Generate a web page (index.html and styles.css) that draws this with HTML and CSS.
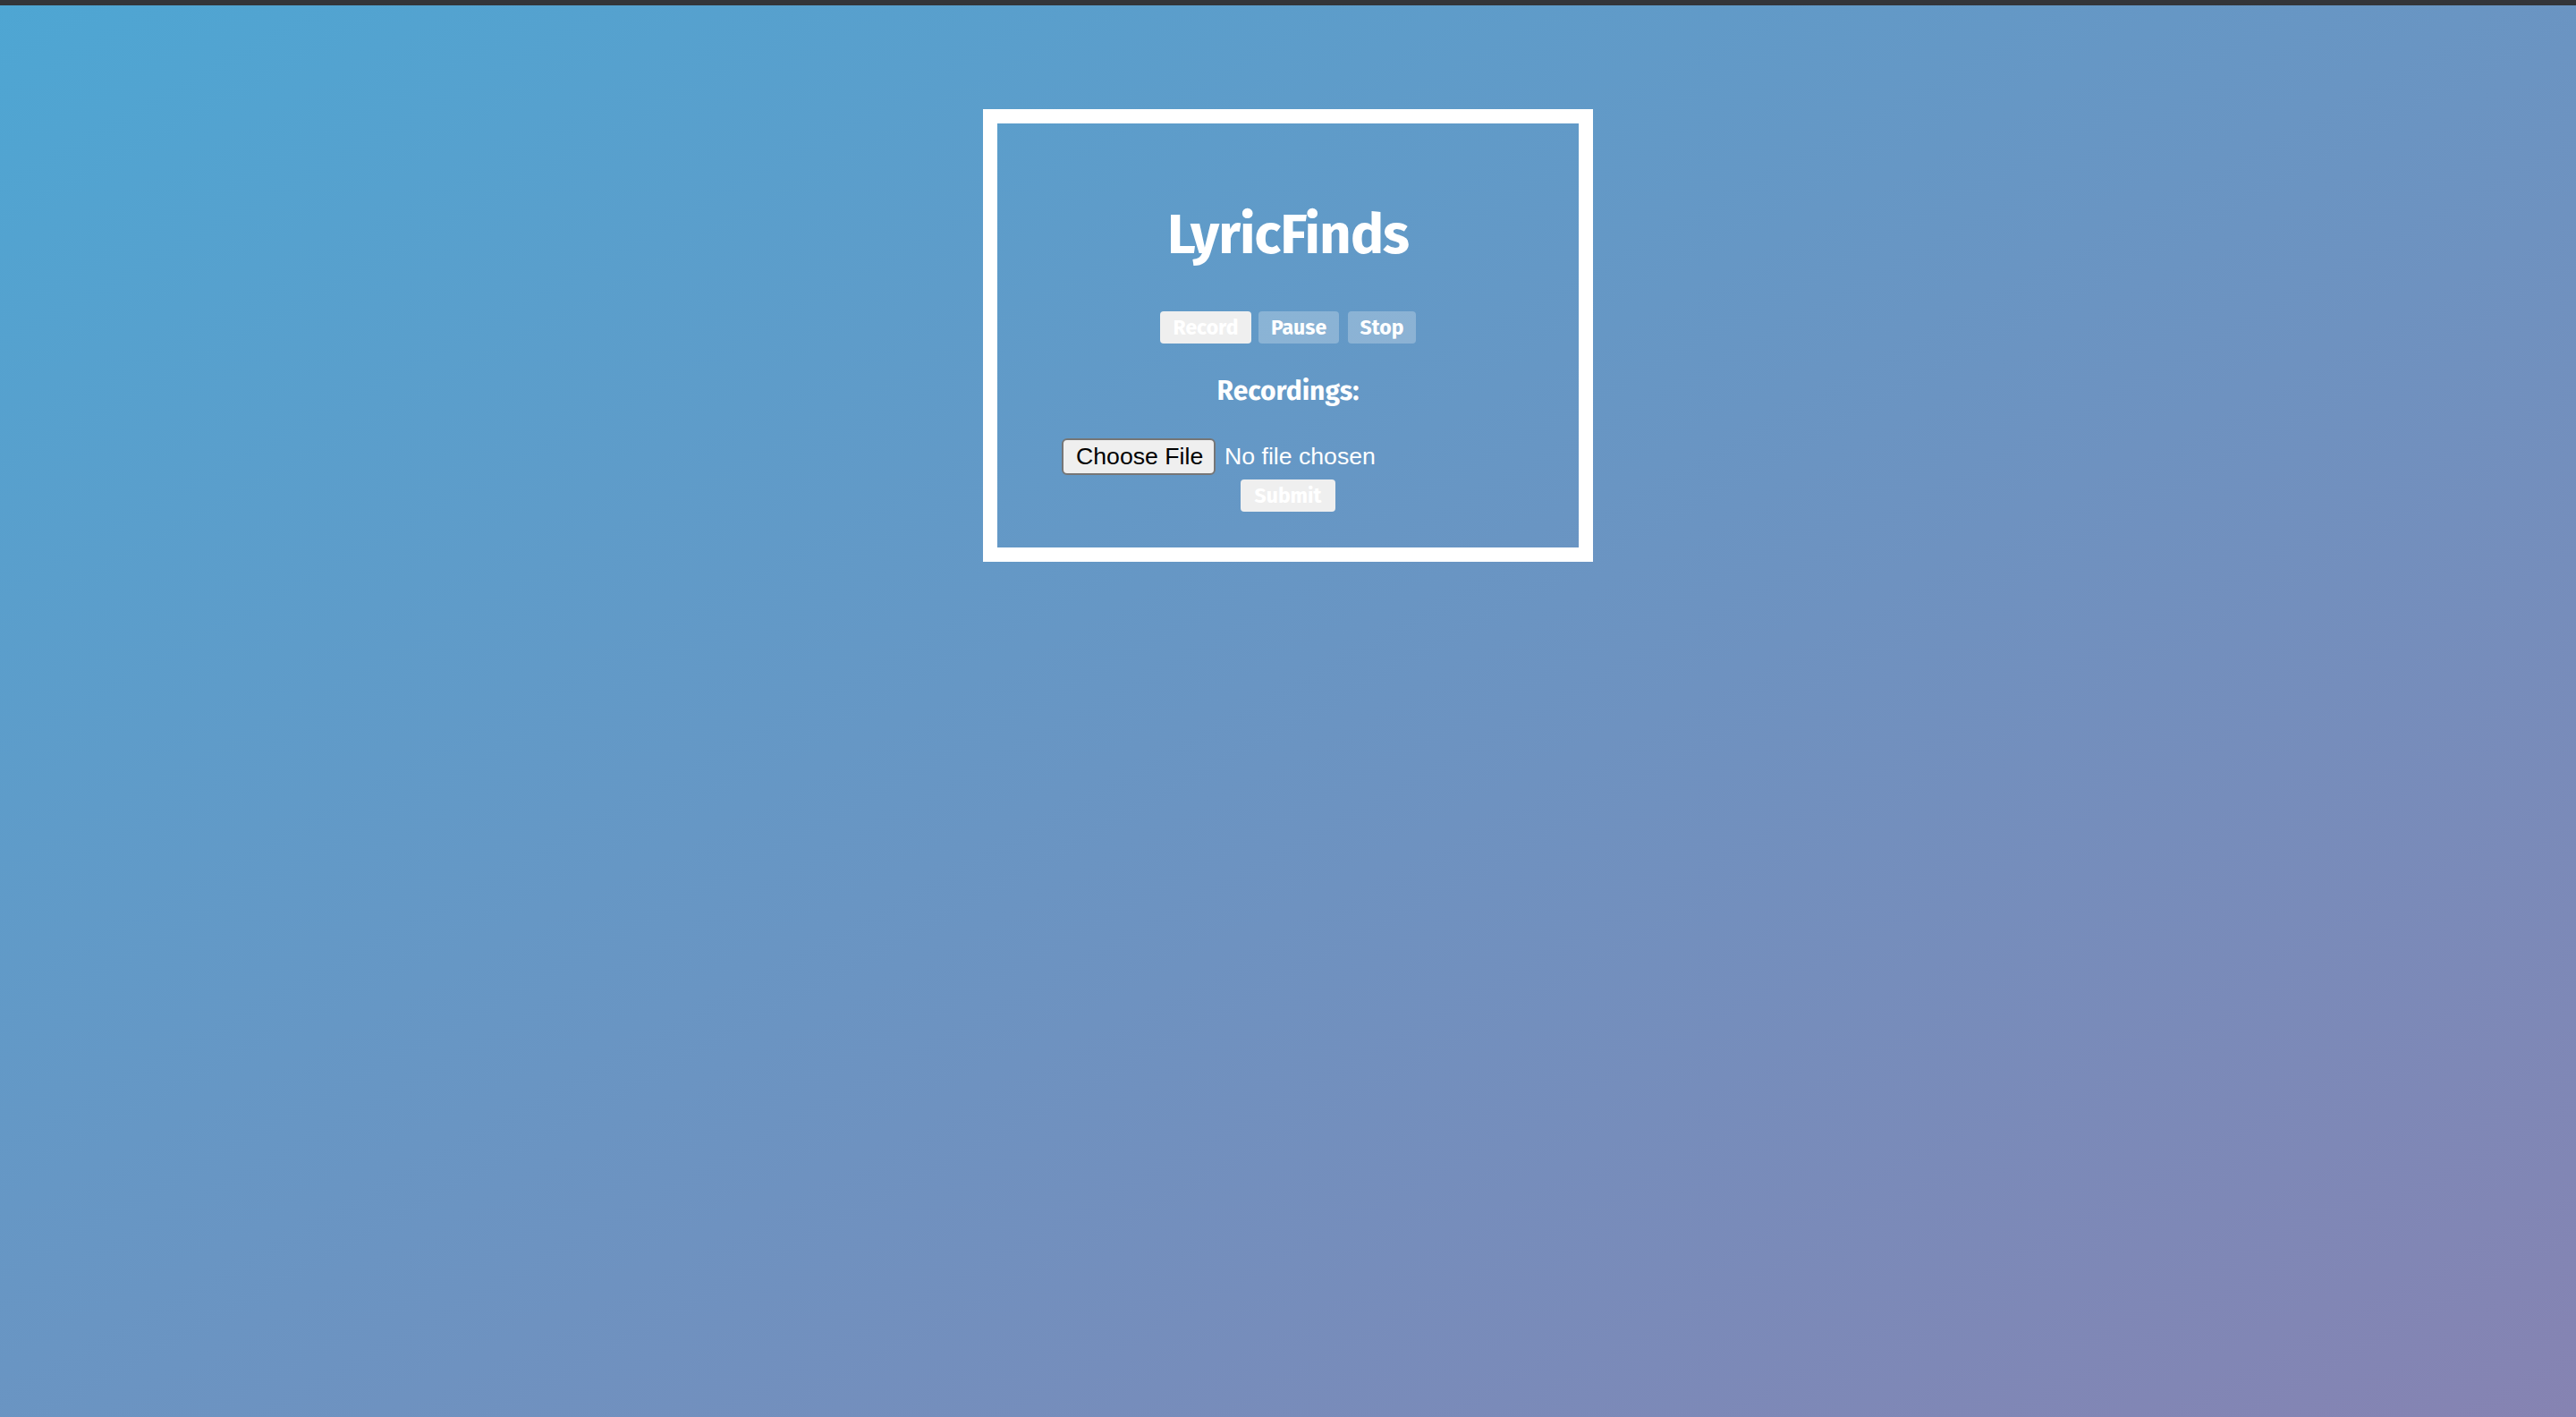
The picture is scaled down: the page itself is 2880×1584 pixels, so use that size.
FILE: index.html
```html
<!DOCTYPE html>
<html lang="en">
<head>
<meta charset="utf-8">
<title>LyricFinds</title>
<link rel="stylesheet" href="styles.css">
</head>
<body>
<div class="topbar"></div>
<main class="page">
  <section class="box">
    <h1 class="title">LyricFinds</h1>
    <div class="controls">
      <button class="btn btn-light btn-record" type="button">Record</button>
      <button class="btn btn-glass btn-pause" type="button">Pause</button>
      <button class="btn btn-glass btn-stop" type="button">Stop</button>
    </div>
    <h3 class="recordings">Recordings:</h3>
    <form class="upload">
      <input class="file" type="file" name="file">
      <button class="btn btn-light btn-submit" type="submit">Submit</button>
    </form>
  </section>
</main>
</body>
</html>
```
FILE: styles.css
```css
html, body {
  margin: 0;
  padding: 0;
}
body {
  min-height: 1584px;
  background: linear-gradient(to bottom right, #4ea6d3, #8683b2);
  font-family: "Fira Sans", Lato, "Open Sans", sans-serif;
  color: #fff;
}
.topbar {
  height: 6px;
  background: #333539;
}
.page {
  padding-top: 116px;
}
.box {
  box-sizing: border-box;
  width: 682px;
  margin: 0 auto;
  border: 16px solid #fff;
  padding: 86px 0 40px;
  text-align: center;
}
.title {
  margin: 0;
  font-size: 62px;
  line-height: 77px;
  font-weight: 700;
  letter-spacing: -1px;
}
.controls {
  display: flex;
  justify-content: center;
  gap: 8px;
  margin-top: 47px;
}
.btn {
  height: 36px;
  padding: 0;
  border: none;
  border-radius: 4px;
  font-family: "Fira Sans", Lato, "Open Sans", sans-serif;
  font-size: 23px;
  font-weight: 700;
  line-height: 36px;
  color: #fff;
  cursor: pointer;
}
.btn-light {
  background: #efefef;
}
.btn-glass {
  background: rgba(255, 255, 255, 0.26);
}
.btn-record { width: 102px; }
.btn-pause { width: 90px; margin-right: 2px; }
.btn-stop { width: 76px; }
.btn-submit { width: 106px; }
.recordings {
  margin: 35px 0 0;
  font-size: 30px;
  line-height: 36px;
  font-weight: 700;
}
.upload {
  display: flex;
  flex-direction: column;
  align-items: center;
  gap: 5px;
  margin-top: 35px;
}
.file {
  width: 506px;
  height: 41px;
  margin: 0;
  padding: 0;
  font-family: "Liberation Sans", Arial, sans-serif;
  font-size: 26.67px;
  color: #fff;
}
.file::file-selector-button {
  box-sizing: border-box;
  width: 172px;
  height: 41px;
  margin: 0 10px 0 0;
  padding: 0 14px;
  border: 2px solid #767676;
  border-radius: 6px;
  background: #efefef;
  color: #000;
  font-family: "Liberation Sans", Arial, sans-serif;
  font-size: 26.67px;
}
```
